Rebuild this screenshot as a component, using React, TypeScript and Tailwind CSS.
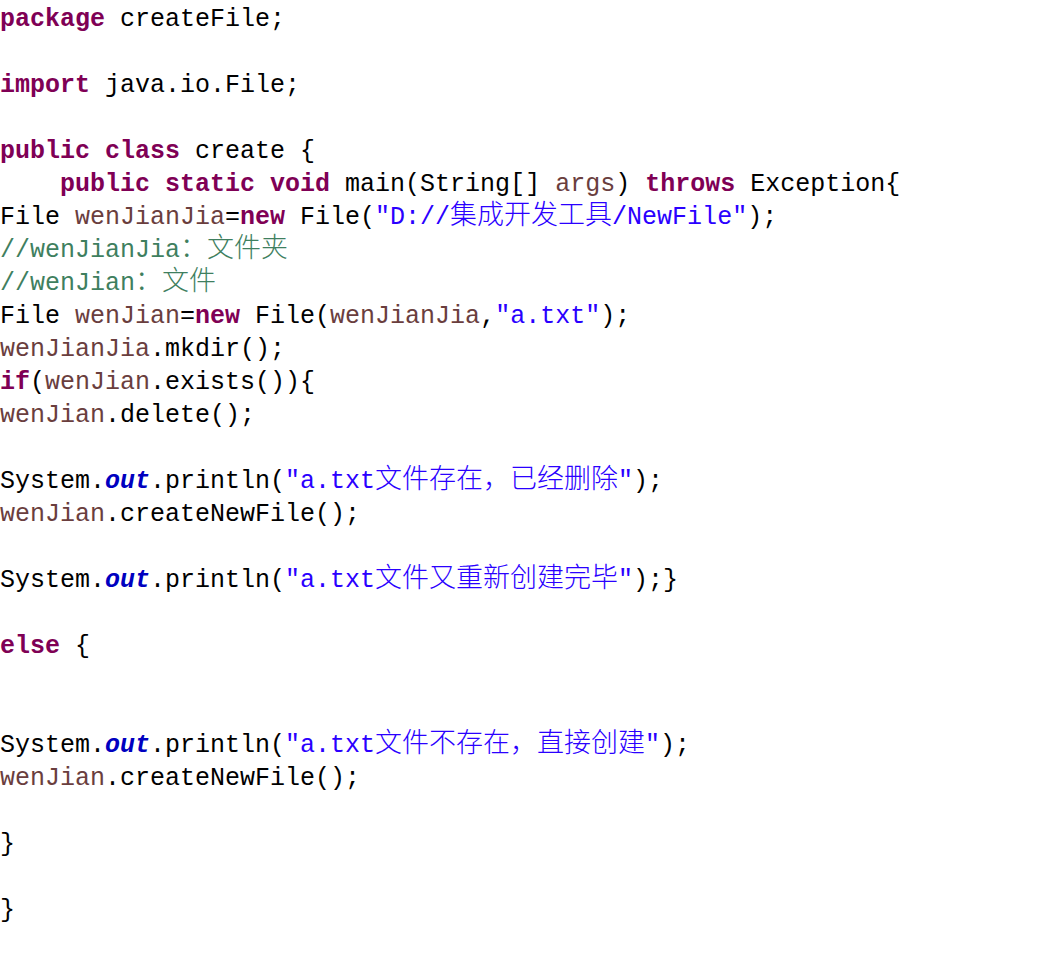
import React from "react";

type T = [string, string];

const lines: T[][] = [
  [["k", "package"], ["p", " createFile;"]],
  [],
  [["k", "import"], ["p", " java.io.File;"]],
  [],
  [["k", "public"], ["p", " "], ["k", "class"], ["p", " create {"]],
  [["p", "    "], ["k", "public"], ["p", " "], ["k", "static"], ["p", " "], ["k", "void"], ["p", " main(String[] "], ["v", "args"], ["p", ") "], ["k", "throws"], ["p", " Exception{"]],
  [["p", "File "], ["v", "wenJianJia"], ["p", "="], ["k", "new"], ["p", " File("], ["s", "\"D://集成开发工具/NewFile\""], ["p", ");"]],
  [["c", "//wenJianJia：文件夹"]],
  [["c", "//wenJian：文件"]],
  [["p", "File "], ["v", "wenJian"], ["p", "="], ["k", "new"], ["p", " File("], ["v", "wenJianJia"], ["p", ","], ["s", "\"a.txt\""], ["p", ");"]],
  [["v", "wenJianJia"], ["p", ".mkdir();"]],
  [["k", "if"], ["p", "("], ["v", "wenJian"], ["p", ".exists()){"]],
  [["v", "wenJian"], ["p", ".delete();"]],
  [],
  [["p", "System."], ["f", "out"], ["p", ".println("], ["s", "\"a.txt文件存在，已经删除\""], ["p", ");"]],
  [["v", "wenJian"], ["p", ".createNewFile();"]],
  [],
  [["p", "System."], ["f", "out"], ["p", ".println("], ["s", "\"a.txt文件又重新创建完毕\""], ["p", ");}"]],
  [],
  [["k", "else"], ["p", " {"]],
  [],
  [],
  [["p", "System."], ["f", "out"], ["p", ".println("], ["s", "\"a.txt文件不存在，直接创建\""], ["p", ");"]],
  [["v", "wenJian"], ["p", ".createNewFile();"]],
  [],
  [["p", "}"]],
  [],
  [["p", "}"]],
];

const colorOf: Record<string, string> = {
  k: "text-[#7f0055] font-bold",
  p: "text-black",
  v: "text-[#6a3e3e]",
  s: "text-[#2a00ff]",
  c: "text-[#3f7f5f]",
  f: "text-[#0000c0] font-bold italic",
};

const isCJK = (ch: string) => /[\u3000-\u9fff\uff00-\uffef]/.test(ch);

function splitRuns(text: string): { cjk: boolean; t: string }[] {
  const runs: { cjk: boolean; t: string }[] = [];
  for (const ch of text) {
    const c = isCJK(ch);
    const last = runs[runs.length - 1];
    if (last && last.cjk === c) last.t += ch;
    else runs.push({ cjk: c, t: ch });
  }
  return runs;
}

export default function App() {
  return (
    <div className="w-[1054px] h-[953px] bg-white overflow-hidden pt-[3px] font-['Liberation_Mono','Noto_Sans_CJK_SC',monospace] text-[25px] leading-[33px]">
      {lines.map((line, i) => (
        <div key={i} className="h-[33px] whitespace-pre">
          {line.map(([type, text], j) => (
            <span key={j} className={colorOf[type]}>
              {splitRuns(text).map((r, k) =>
                r.cjk ? (
                  <span key={k} className="font-['Noto_Sans_CJK_SC',sans-serif] text-[27px] leading-[0px] font-light not-italic">
                    {r.t}
                  </span>
                ) : (
                  <React.Fragment key={k}>{r.t}</React.Fragment>
                )
              )}
            </span>
          ))}
        </div>
      ))}
    </div>
  );
}
